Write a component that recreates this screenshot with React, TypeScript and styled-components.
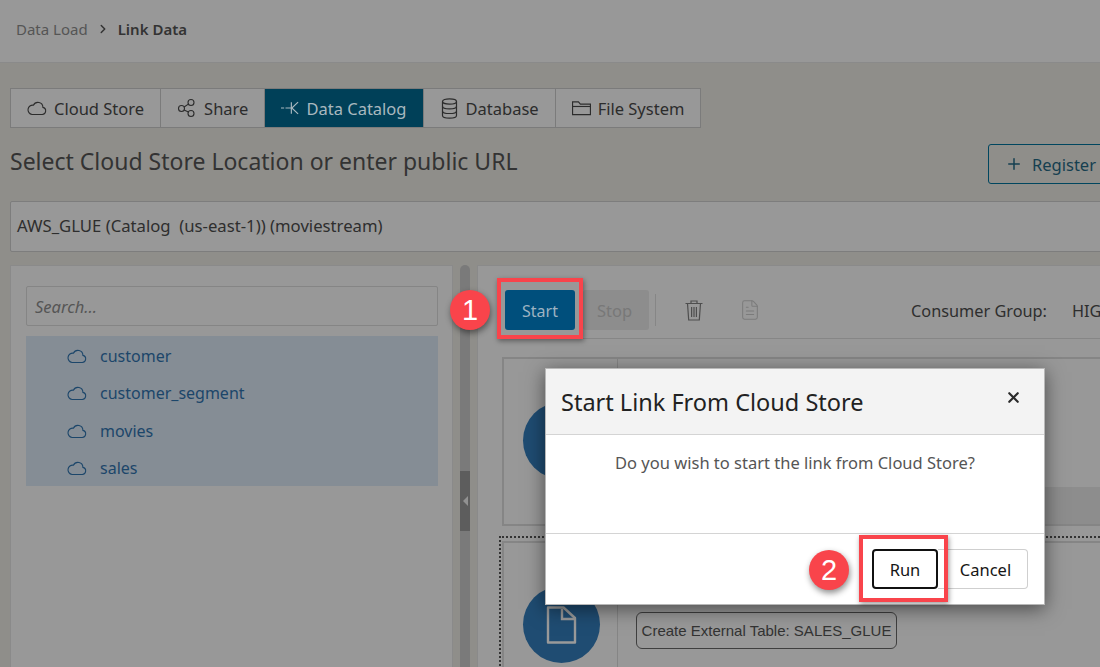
import React from 'react';
import styled, { createGlobalStyle } from 'styled-components';
import { ChevronRight, FileText, Plus, X } from 'lucide-react';

const GlobalStyle = createGlobalStyle`
    html, body {
        margin: 0;
        padding: 0;
        background: #8f8e8a;
    }

    * {
        box-sizing: border-box;
    }

    body {
        font-family: "Noto Sans", "Open Sans", sans-serif;
    }

    svg {
        flex: none;
    }
`;

// Page
const Page = styled.div`
    position: relative;
    width: 1100px;
    height: 667px;
    overflow: hidden;
    background: #8f8e8a;
`;

const Header = styled.header`
    height: 63px;
    padding: 0 0 4px 16px;
    display: flex;
    align-items: center;
    gap: 8px;
    background: #989898;
    border-bottom: 1px solid #8a8a8a;
    font-size: 15px;
`;

const Crumb = styled.span`
    color: #555;
`;

const CrumbCurrent = styled.span`
    color: #333;
    font-weight: 600;
`;

const Main = styled.main`
    width: 1180px;
    padding: 25px 0 0 10px;
`;

// Tabs
const Tabs = styled.div`
    display: flex;
    width: max-content;
    height: 40px;
    border: 1px solid #7b7b7b;
    background: #989898;
`;

const Tab = styled.div<{ $active?: boolean }>`
    display: flex;
    align-items: center;
    gap: 7px;
    padding: 0 16px;
    font-size: 16.5px;
    white-space: nowrap;
    color: ${(p) => (p.$active ? '#a8b8bf' : '#2c2c2c')};
    background: ${(p) => (p.$active ? '#004058' : 'transparent')};
    border-right: 1px solid #7b7b7b;

    &:last-child {
        border-right: none;
    }
`;

const TitleRow = styled.div`
    width: 1158px;
    height: 73px;
    display: flex;
    align-items: center;
    justify-content: space-between;
`;

const Title = styled.h1`
    margin: 0 0 7px;
    font-size: 23px;
    font-weight: 400;
    color: #333;
`;

const RegisterButton = styled.div`
    width: 180px;
    height: 40px;
    margin-bottom: 1px;
    display: flex;
    align-items: center;
    gap: 9px;
    padding-left: 16px;
    font-size: 16.5px;
    white-space: nowrap;
    overflow: hidden;
    color: #153f50;
    border: 1px solid #00465f;
    border-radius: 3px;
`;

const LocationBox = styled.div`
    height: 51px;
    padding: 0 0 2px 6px;
    display: flex;
    align-items: center;
    font-size: 16.7px;
    color: #2e2e2e;
    background: #989898;
    border: 1px solid #7d7d7d;
    border-radius: 2px;
`;

const Split = styled.div`
    display: flex;
    margin-top: 13px;
    height: 420px;
`;

// Left panel
const LeftPanel = styled.aside`
    width: 443px;
    padding: 20px 14px 0 15px;
    background: #989898;
    border: 1px solid #8a8a8a;
`;

const SearchBox = styled.div`
    height: 40px;
    padding-left: 8px;
    display: flex;
    align-items: center;
    font-size: 16.5px;
    font-style: italic;
    color: #555;
    border: 1px solid #858585;
    border-radius: 2px;
`;

const StoreList = styled.ul`
    list-style: none;
    margin: 10px 0 0;
    padding: 1px 0 0 41px;
    height: 150px;
    background: #858d95;
`;

const StoreItem = styled.li`
    height: 37.5px;
    display: flex;
    align-items: center;
    gap: 13px;
    font-size: 16px;
    color: #1c466a;
`;

// Splitter
const Splitter = styled.div`
    position: relative;
    width: 10px;
    margin-left: 7px;
    margin-right: 7px;
    background: #7a7a7a;
    border-radius: 5px 5px 0 0;
`;

const SplitterHandle = styled.div`
    position: absolute;
    top: 206px;
    left: 0;
    width: 10px;
    height: 60px;
    display: flex;
    align-items: center;
    justify-content: center;
    background: #5d5d5d;

    &::before {
        content: '';
        border-style: solid;
        border-width: 5px 5px 5px 0;
        border-color: transparent #929292 transparent transparent;
    }
`;

// Right panel
const RightPanel = styled.section`
    flex: 1;
    background: #989898;
    border: 1px solid #8a8a8a;
`;

const Toolbar = styled.div`
    height: 73px;
    margin-left: 20px;
    padding: 24px 0 0 7px;
    display: flex;
    align-items: flex-start;
    border-bottom: 1px solid #868686;
`;

const StartButton = styled.div`
    width: 70px;
    height: 40px;
    padding-top: 1px;
    display: flex;
    align-items: center;
    justify-content: center;
    font-size: 16px;
    color: #9db3c2;
    background: #004f7c;
    border-radius: 3px;
`;

const StopButton = styled.div`
    width: 66px;
    height: 40px;
    margin-left: 8px;
    padding: 1px 3px 0 0;
    display: flex;
    align-items: center;
    justify-content: center;
    font-size: 16.5px;
    color: #787878;
    background: #8d8d8d;
    border-radius: 3px;
`;

const ToolDivider = styled.div`
    width: 1px;
    height: 32px;
    margin: 4px 10px 0 6px;
    background: #868686;
`;

const ToolIcon = styled.div<{ $dim?: boolean }>`
    width: 56px;
    height: 40px;
    display: flex;
    align-items: center;
    justify-content: center;
    color: ${(p) => (p.$dim ? '#7b7b7b' : '#4e4e4e')};
`;

const ConsumerLabel = styled.div`
    margin-left: 133px;
    height: 40px;
    padding-top: 1px;
    display: flex;
    align-items: center;
    gap: 25px;
    font-size: 16.3px;
    white-space: nowrap;
    color: #2e2e2e;
`;

const Cards = styled.div`
    padding: 18px 0 0 24px;
`;

const Card = styled.div`
    display: flex;
    height: 169px;
    border: 2px solid #858585;
`;

const DottedWrap = styled.div`
    margin: 10px 0 0 -3px;
    padding: 3px 0 0 1px;
    border-top: 2px dotted #333;
    border-left: 2px dotted #333;
`;

const CardIconCol = styled.div`
    width: 114px;
    flex: none;
    padding: 43px 0 0 19px;
    border-right: 1px solid #858585;
`;

const CircleIcon = styled.div`
    width: 77px;
    height: 77px;
    display: flex;
    align-items: center;
    justify-content: center;
    color: #9a9a9a;
    background: #1f4c72;
    border-radius: 50%;
`;

const CardBody = styled.div`
    flex: 1;
    display: flex;
    flex-direction: column;
    justify-content: flex-end;
`;

const CardFooter = styled.div`
    height: 37px;
    background: #8d8d8d;
`;

const CardChipArea = styled.div`
    flex: 1;
    padding: 69px 0 0 18px;
`;

const Chip = styled.div`
    width: 261px;
    height: 37px;
    display: flex;
    align-items: center;
    justify-content: center;
    font-family: "Liberation Sans", Arial, sans-serif;
    font-size: 15px;
    color: #333;
    border: 1px solid #3f3f3f;
    border-radius: 6px;
    white-space: nowrap;
`;

// Dialog
const Dialog = styled.div`
    position: absolute;
    top: 368px;
    left: 545px;
    width: 500px;
    height: 237px;
    display: flex;
    flex-direction: column;
    background: #fff;
    border: 1px solid #b8b8b8;
    box-shadow: 0 4px 18px rgba(0, 0, 0, 0.5);
`;

const DialogHeader = styled.div`
    height: 66px;
    padding: 1px 22px 0 15px;
    display: flex;
    align-items: center;
    justify-content: space-between;
    background: #f3f3f3;
    border-bottom: 1px solid #d4d4d4;
`;

const DialogTitle = styled.h2`
    margin: 0;
    font-size: 23.5px;
    font-weight: 400;
    color: #222;
`;

const CloseButton = styled.div`
    display: flex;
    margin-top: -9px;
    color: #2a2a2a;
`;

const DialogBody = styled.div`
    flex: 1;
    padding-top: 16px;
    text-align: center;
    font-size: 16.5px;
    color: #555;
`;

const DialogFooter = styled.div`
    height: 71px;
    padding: 15px 16px 0 0;
    display: flex;
    justify-content: flex-end;
    border-top: 1px solid #d4d4d4;
`;

const RunButton = styled.div`
    width: 66px;
    height: 40px;
    padding-top: 1px;
    display: flex;
    align-items: center;
    justify-content: center;
    font-size: 16.5px;
    color: #161616;
    background: #fff;
    border: 2px solid #111;
    border-radius: 4px;
`;

const CancelButton = styled.div`
    width: 90px;
    height: 40px;
    padding: 1px 0 0 6px;
    display: flex;
    align-items: center;
    justify-content: center;
    font-size: 16.5px;
    color: #161616;
    border: 1px solid #cfcfcf;
    border-left: none;
    border-radius: 0 4px 4px 0;
`;

// Screenshot annotations
const Callout = styled.div<{ $x: number; $y: number; $w: number; $h: number }>`
    position: absolute;
    left: ${(p) => p.$x}px;
    top: ${(p) => p.$y}px;
    width: ${(p) => p.$w}px;
    height: ${(p) => p.$h}px;
    border: 4px solid #f9444b;
    box-shadow: 1px 2px 5px rgba(0, 0, 0, 0.4);
`;

const Badge = styled.div<{ $x: number; $y: number }>`
    position: absolute;
    left: ${(p) => p.$x}px;
    top: ${(p) => p.$y}px;
    width: 40px;
    height: 40px;
    display: flex;
    align-items: center;
    justify-content: center;
    font-family: "Liberation Sans", Arial, sans-serif;
    font-size: 29px;
    color: #fff;
    background: #f9444b;
    border-radius: 50%;
    box-shadow: 1px 3px 6px rgba(0, 0, 0, 0.45);
`;

const CloudIcon: React.FC = () => (
    <svg width="20" height="16" viewBox="0 0 20 16" fill="none" stroke="currentColor" strokeWidth="1.1">
        <path d="M5 14.5h10.2a3.6 3.6 0 0 0 .7-7.1 5 5 0 0 0-9.5-2.2A4.6 4.6 0 0 0 5 14.5z" />
    </svg>
);

const ShareIcon: React.FC = () => (
    <svg width="20" height="20" viewBox="0 0 20 20" fill="none" stroke="currentColor" strokeWidth="1.1">
        <circle cx="4.5" cy="10.5" r="3" />
        <circle cx="14" cy="4.5" r="3" />
        <circle cx="14" cy="15.5" r="3" />
        <path d="M7.1 9l4.3-2.9M7.1 12l4.3 2" />
    </svg>
);

const CatalogIcon: React.FC = () => (
    <svg width="18" height="16" viewBox="0 0 20 16" fill="none" stroke="currentColor" strokeWidth="1.3">
        <path d="M0 8h3.5M5 8h6M11.5 1.5v13M19 1.5L12 8l7 6.5" />
    </svg>
);

const DatabaseIcon: React.FC = () => (
    <svg width="19" height="21" viewBox="0 0 19 21" fill="none" stroke="currentColor" strokeWidth="1.2">
        <ellipse cx="9.5" cy="3.5" rx="7" ry="2.6" />
        <path d="M2.5 3.5v14c0 1.4 3.1 2.6 7 2.6s7-1.2 7-2.6v-14" />
        <path d="M2.5 8.2c0 1.4 3.1 2.6 7 2.6s7-1.2 7-2.6M2.5 12.9c0 1.4 3.1 2.6 7 2.6s7-1.2 7-2.6" />
    </svg>
);

const FolderIcon: React.FC = () => (
    <svg width="19" height="16" viewBox="0 0 20 16" fill="none" stroke="currentColor" strokeWidth="1.2">
        <path d="M.6 14.9V1.6h6.2l2 2.3h10.6v11z" />
        <path d="M.6 6.4h18.8" />
    </svg>
);

const TrashIcon: React.FC = () => (
    <svg width="18" height="21" viewBox="0 0 18 21" fill="none" stroke="currentColor" strokeWidth="1.2">
        <path d="M.5 3.5h17M6 3.5V1h6v2.5M2.5 3.5l1.2 16.5h10.6l1.2-16.5M6.6 7v10M9 7v10M11.4 7v10" />
    </svg>
);

const SheetIcon: React.FC = () => (
    <svg width="31" height="38" viewBox="0 0 31 38" fill="none" stroke="currentColor" strokeWidth="2.4">
        <path d="M2 1.5h15.5L29 12v24.5H2z" strokeLinejoin="round" />
        <path d="M16 3v10h12" />
    </svg>
);

const stores = ['customer', 'customer_segment', 'movies', 'sales'];

const App: React.FC = () => {
    return (
        <Page>
            <GlobalStyle />
            <Header>
                <Crumb>Data Load</Crumb>
                <ChevronRight size={14} strokeWidth={2.5} color="#333" />
                <CrumbCurrent>Link Data</CrumbCurrent>
            </Header>
            <Main>
                <Tabs>
                    <Tab><CloudIcon />Cloud Store</Tab>
                    <Tab><ShareIcon />Share</Tab>
                    <Tab $active><CatalogIcon />Data Catalog</Tab>
                    <Tab><DatabaseIcon />Database</Tab>
                    <Tab><FolderIcon />File System</Tab>
                </Tabs>
                <TitleRow>
                    <Title>Select Cloud Store Location or enter public URL</Title>
                    <RegisterButton><Plus size={18} strokeWidth={2} />Register Cloud Store</RegisterButton>
                </TitleRow>
                <LocationBox>AWS_GLUE (Catalog&nbsp; (us-east-1)) (moviestream)</LocationBox>
                <Split>
                    <LeftPanel>
                        <SearchBox>Search...</SearchBox>
                        <StoreList>
                            {stores.map((name) => (
                                <StoreItem key={name}><CloudIcon />{name}</StoreItem>
                            ))}
                        </StoreList>
                    </LeftPanel>
                    <Splitter><SplitterHandle /></Splitter>
                    <RightPanel>
                        <Toolbar>
                            <StartButton>Start</StartButton>
                            <StopButton>Stop</StopButton>
                            <ToolDivider />
                            <ToolIcon><TrashIcon /></ToolIcon>
                            <ToolIcon $dim><FileText size={22} strokeWidth={1.1} /></ToolIcon>
                            <ConsumerLabel>Consumer Group:<span>HIGH</span></ConsumerLabel>
                        </Toolbar>
                        <Cards>
                            <Card>
                                <CardIconCol><CircleIcon /></CardIconCol>
                                <CardBody><CardFooter /></CardBody>
                            </Card>
                            <DottedWrap>
                                <Card>
                                    <CardIconCol>
                                        <CircleIcon><SheetIcon /></CircleIcon>
                                    </CardIconCol>
                                    <CardChipArea><Chip>Create External Table: SALES_GLUE</Chip></CardChipArea>
                                </Card>
                            </DottedWrap>
                        </Cards>
                    </RightPanel>
                </Split>
            </Main>
            <Callout $x={497} $y={278} $w={86} $h={61} />
            <Badge $x={450} $y={290}>1</Badge>
            <Dialog>
                <DialogHeader>
                    <DialogTitle>Start Link From Cloud Store</DialogTitle>
                    <CloseButton><X size={17} strokeWidth={3} /></CloseButton>
                </DialogHeader>
                <DialogBody>Do you wish to start the link from Cloud Store?</DialogBody>
                <DialogFooter>
                    <RunButton>Run</RunButton>
                    <CancelButton>Cancel</CancelButton>
                </DialogFooter>
            </Dialog>
            <Callout $x={859} $y={535} $w={89} $h={67} />
            <Badge $x={809} $y={550}>2</Badge>
        </Page>
    );
};

export default App;
